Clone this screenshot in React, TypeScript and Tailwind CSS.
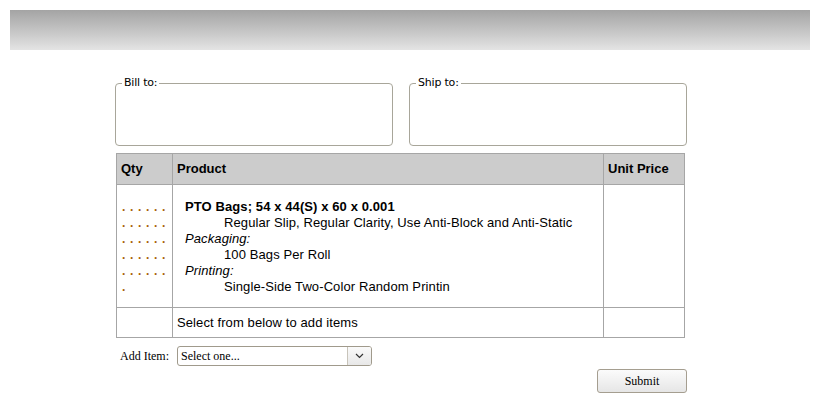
import React from 'react';

const Fieldset: React.FC<{ label: string }> = ({ label }) => (
  <fieldset className="w-[279px] h-[69px] border border-[#a8a69a] rounded-[4px] px-[6px] pb-0 m-0">
    <legend className="px-[2px] text-[11px] leading-[12px] text-black font-['DejaVu_Sans',sans-serif] tracking-[-0.2px]">
      {label}
    </legend>
  </fieldset>
);

const App: React.FC = () => {
  const dotRows = [6, 6, 6, 6, 6, 1];

  return (
    <div className="w-[820px] h-[402px] bg-white pt-[10px] px-[10px] font-['Liberation_Sans',Arial,sans-serif]">
      <div className="h-[40px] bg-gradient-to-b from-[#a4a4a4] to-[#e4e4e4]" />

      <div className="ml-[105px] w-[572px] mt-[27px]">
        <div className="flex gap-[16px]">
          <Fieldset label="Bill to:" />
          <Fieldset label="Ship to:" />
        </div>

        <table className="mt-[7px] ml-[1px] w-[569px] border-collapse text-[13px] text-black">
          <thead>
            <tr className="bg-[#cccccc] h-[31px]">
              <th className="w-[56px] border border-[#a6a6a6] text-left px-[4px] text-[13px] font-bold">Qty</th>
              <th className="w-[431px] border border-[#a6a6a6] text-left px-[4px] text-[13px] font-bold">Product</th>
              <th className="border border-[#a6a6a6] text-left px-[4px] text-[13px] font-bold">Unit Price</th>
            </tr>
          </thead>
          <tbody>
            <tr className="h-[123px]">
              <td className="border border-[#a6a6a6] align-middle pl-[5px] pt-[2px] text-[12px]">
                {dotRows.map((n, i) => (
                  <div key={i} className="flex h-[16px] leading-[16px] text-[#a8620c] font-bold">
                    {Array.from({ length: n }).map((_, j) => (
                      <span key={j} className="w-[8px]">.</span>
                    ))}
                  </div>
                ))}
              </td>
              <td className="border border-[#a6a6a6] align-middle pl-[12px] leading-[16px] pt-[2px] tracking-[0.1px]">
                <div className="font-bold">PTO Bags; 54 x 44(S) x 60 x 0.001</div>
                <div className="pl-[39px]">Regular Slip, Regular Clarity, Use Anti-Block and Anti-Static</div>
                <div className="italic">Packaging:</div>
                <div className="pl-[39px]">100 Bags Per Roll</div>
                <div className="italic">Printing:</div>
                <div className="pl-[39px]">Single-Side Two-Color Random Printin</div>
              </td>
              <td className="border border-[#a6a6a6]" />
            </tr>
            <tr className="h-[30px]">
              <td className="border border-[#a6a6a6]" />
              <td className="border border-[#a6a6a6] px-[4px] tracking-[0.1px]">Select from below to add items</td>
              <td className="border border-[#a6a6a6]" />
            </tr>
          </tbody>
        </table>

        <div className="flex items-center mt-[8px] ml-[5px] font-['Liberation_Serif','Times_New_Roman',serif] text-[12px] text-black">
          <span className="mr-[8px]">Add Item:</span>
          <div className="flex w-[195px] h-[20px] border border-[#a09a8c] rounded-[3px] bg-white overflow-hidden">
            <span className="flex-1 pl-[3px] leading-[18px]">Select one...</span>
            <span className="w-[24px] border-l border-[#c8c4ba] bg-gradient-to-b from-[#fafafa] to-[#e8e8e8] flex items-center justify-center">
              <svg width="9" height="6" viewBox="0 0 9 6" fill="none">
                <path d="M1 1 L4.5 4.5 L8 1" stroke="#333" strokeWidth="1.2" />
              </svg>
            </span>
          </div>
        </div>

        <div className="flex justify-end mt-[3px]">
          <button className="w-[90px] h-[24px] border border-[#a59e90] rounded-[3px] bg-gradient-to-b from-[#fbfbfb] to-[#e6e6e6] font-['Liberation_Serif','Times_New_Roman',serif] text-[12px] text-black">
            Submit
          </button>
        </div>
      </div>
    </div>
  );
};

export default App;
